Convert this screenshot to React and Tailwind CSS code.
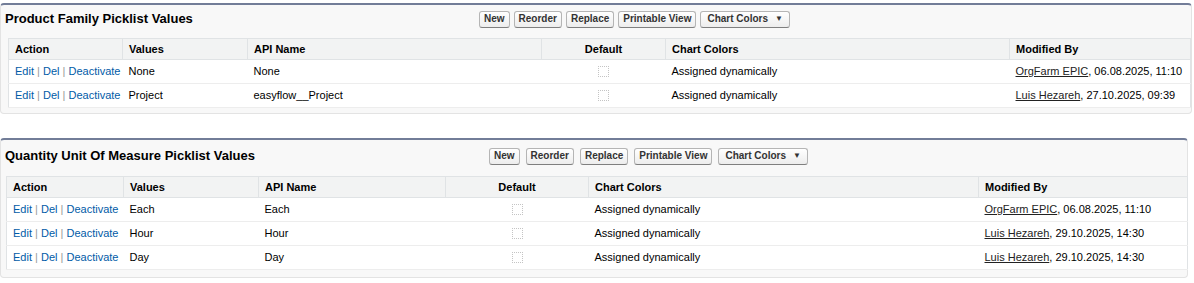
const blocks = [
  {
    title: 'Product Family Picklist Values',
    wrap: 'mt-[3px] w-[1192px] pb-[5px]',
    pad: 'px-[7px]',
    head: 'h-[33px] pb-[5px]',
    titleW: 'w-[474px]',
    gap: 'gap-[4px]',
    cols: ['w-[114px]', 'w-[125px]', 'w-[294px]', 'w-[124px]', 'w-[344px]', 'w-[181px]'],
    rows: [
      { value: 'None', api: 'None', by: 'OrgFarm EPIC', at: '06.08.2025, 11:10' },
      { value: 'Project', api: 'easyflow__Project', by: 'Luis Hezareh', at: '27.10.2025, 09:39' },
    ],
  },
  {
    title: 'Quantity Unit Of Measure Picklist Values',
    wrap: 'mt-[24px] w-[1188px] pb-[7px]',
    pad: 'px-[5px]',
    head: 'h-[36px] pb-[4px]',
    titleW: 'w-[484px]',
    gap: 'gap-[6px]',
    cols: ['w-[117px]', 'w-[135px]', 'w-[187px]', 'w-[143px]', 'w-[390px]', 'w-[209px]'],
    rows: [
      { value: 'Each', api: 'Each', by: 'OrgFarm EPIC', at: '06.08.2025, 11:10' },
      { value: 'Hour', api: 'Hour', by: 'Luis Hezareh', at: '29.10.2025, 14:30' },
      { value: 'Day', api: 'Day', by: 'Luis Hezareh', at: '29.10.2025, 14:30' },
    ],
  },
]

const btn = 'h-[17px] rounded-[3px] border border-[#b5b5b5] border-b-[#7f7f7f] bg-gradient-to-b from-white to-[#ededed] text-[10px] font-bold text-[#333] leading-none'

function Btn({ children }) {
  return <button className={`${btn} px-[4px]`}>{children}</button>
}

function Block({ b }) {
  const th = 'h-[21px] px-[6px] text-left font-bold text-black bg-[#f2f3f3] border-b border-[#e0e3e5]'
  const td = 'h-[24px] px-[6px] text-black bg-white border-b border-[#ededed]'
  return (
    <div className={`${b.wrap} bg-[#f8f8f8] rounded-[4px] border border-[#e3e3e3] border-t-2 border-t-[#727d98]`}>
      <div className={`${b.head} pl-[4px] flex items-center`}>
        <div className={`${b.titleW} text-[13px] font-bold text-black`}>{b.title}</div>
        <div className={`flex ${b.gap}`}>
          <Btn>New</Btn>
          <Btn>Reorder</Btn>
          <Btn>Replace</Btn>
          <Btn>Printable View</Btn>
          <button className={`${btn} pl-[6px] pr-[6px] flex items-center gap-[7px]`}>
            Chart Colors <span className="text-[8px]">▼</span>
          </button>
        </div>
      </div>
      <div className={b.pad}>
        <table className="table-fixed w-full border-collapse border border-[#e0e3e5] text-[11px]">
          <colgroup>
            {b.cols.map((c, i) => <col key={i} className={c} />)}
          </colgroup>
          <thead>
            <tr>
              <th className={th}>Action</th>
              <th className={`${th} border-l`}>Values</th>
              <th className={`${th} border-l`}>API Name</th>
              <th className={`${th} border-l !text-center`}>Default</th>
              <th className={`${th} border-l`}>Chart Colors</th>
              <th className={`${th} border-l`}>Modified By</th>
            </tr>
          </thead>
          <tbody>
            {b.rows.map(r => (
              <tr key={r.value}>
                <td className={`${td} whitespace-nowrap`}>
                  <a className="text-[#015ba7]">Edit</a>
                  <span className="text-[#999]"> | </span>
                  <a className="text-[#015ba7]">Del</a>
                  <span className="text-[#999]"> | </span>
                  <a className="text-[#015ba7]">Deactivate</a>
                </td>
                <td className={td}>{r.value}</td>
                <td className={td}>{r.api}</td>
                <td className={td}>
                  <div className="mx-auto w-[11px] h-[11px] border border-dotted border-[#c4c4c4]" />
                </td>
                <td className={td}>Assigned dynamically</td>
                <td className={`${td} whitespace-nowrap`}>
                  <a className="underline text-[#222]">{r.by}</a>, {r.at}
                </td>
              </tr>
            ))}
          </tbody>
        </table>
      </div>
    </div>
  )
}

export default function App() {
  return (
    <div className="w-[1194px] h-[283px] bg-white font-['Liberation_Sans',Arial,sans-serif]">
      {blocks.map(b => <Block key={b.title} b={b} />)}
    </div>
  )
}
